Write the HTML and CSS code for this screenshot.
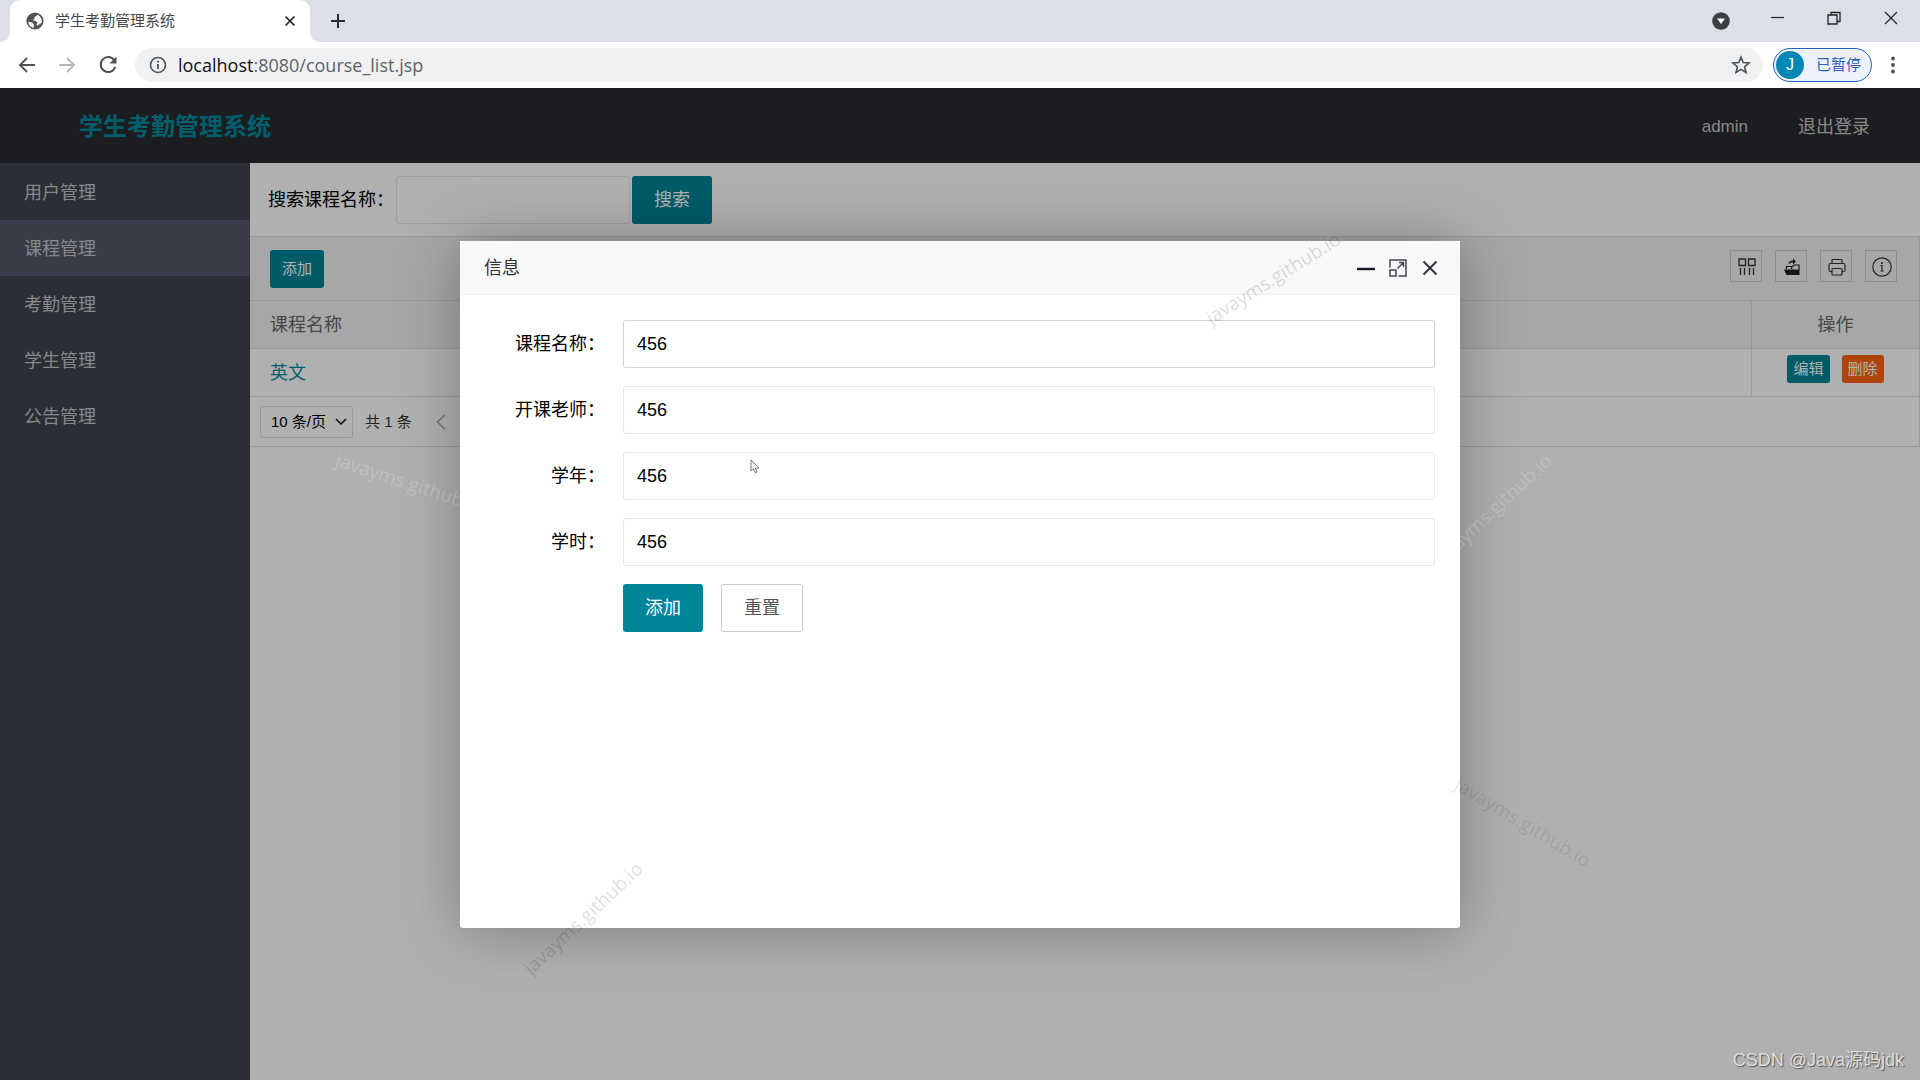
FILE: index.html
```html
<!DOCTYPE html>
<html lang="zh-CN">
<head>
<meta charset="utf-8">
<title>学生考勤管理系统</title>
<link rel="stylesheet" href="styles.css">
</head>
<body>
<header class="browser">
  <div class="tab-strip">
    <div class="tab">
      <svg class="tab-globe" viewBox="0 0 18 18" width="18" height="18"><circle cx="9" cy="9" r="8.6" fill="#505458"/><path d="M2.200 9.800 L6 10.500 L8 12.500 L7.500 16 A7 7 0 0 1 2.200 9.800 Z M11.500 2.400 L10.500 4 L8.500 5 L8.500 7 L6.500 8 L9.500 9 L11.500 10.500 L10.500 12 L11 13.800 L13.500 12.200 L15.800 10.500 C16 7 14.500 4 11.500 2.400 Z" fill="#fff"/></svg>
      <span class="tab-title">学生考勤管理系统</span>
      <button class="plain" aria-label="关闭标签页"><svg viewBox="0 0 12 12" width="12" height="12"><path d="M1.500 1.500 L10.500 10.500 M10.500 1.500 L1.500 10.500" stroke="#222" stroke-width="1.7"/></svg></button>
    </div>
    <button class="plain new-tab" aria-label="新标签页"><svg viewBox="0 0 16 16" width="16" height="16"><path d="M8 1 V15 M1 8 H15" stroke="#2a2c30" stroke-width="2"/></svg></button>
    <div class="window-tools">
      <button class="plain" aria-label="搜索标签页"><svg viewBox="0 0 18 18" width="18" height="18"><circle cx="9" cy="9" r="8.800" fill="#3c4043"/><path d="M5 6.500 H13 L9 12 Z" fill="#fff"/></svg></button>
      <button class="plain win" aria-label="最小化"><svg viewBox="0 0 14 14" width="14" height="14"><path d="M1 6.500 H14" stroke="#222" stroke-width="1.200"/></svg></button>
      <button class="plain win" aria-label="还原"><svg viewBox="0 0 14 14" width="14" height="14"><path d="M1 4 H10 V13 H1 Z M4 4 V1.500 H13 V10.500 H10" fill="none" stroke="#222" stroke-width="1.300"/></svg></button>
      <button class="plain win" aria-label="关闭"><svg viewBox="0 0 14 14" width="14" height="14"><path d="M1 1 L13 13 M13 1 L1 13" stroke="#222" stroke-width="1.200"/></svg></button>
    </div>
  </div>
  <div class="nav-bar">
    <button class="plain" aria-label="后退"><svg viewBox="0 0 18 18" width="18" height="18"><path d="M17 9 H2 M9 2 L2 9 L9 16" fill="none" stroke="#4d5156" stroke-width="1.800"/></svg></button>
    <button class="plain" aria-label="前进"><svg viewBox="0 0 18 18" width="18" height="18"><path d="M1 9 H16 M9 2 L16 9 L9 16" fill="none" stroke="#b3b5b8" stroke-width="1.800"/></svg></button>
    <button class="plain" aria-label="重新加载"><svg viewBox="0 0 20 20" width="20" height="20"><path d="M16.500 5.500 A7.500 7.500 0 1 0 17.300 12" fill="none" stroke="#4d5156" stroke-width="2"/><path d="M18.500 1.500 V8.500 H11.500 Z" fill="#4d5156"/></svg></button>
    <div class="address">
      <svg viewBox="0 0 18 18" width="18" height="18"><circle cx="9" cy="9" r="7.500" fill="none" stroke="#4d5156" stroke-width="1.600"/><path d="M9 8 V13" stroke="#4d5156" stroke-width="1.800"/><circle cx="9" cy="5.500" r="1.100" fill="#4d5156"/></svg>
      <span class="url"><span class="host">localhost</span>:8080/course_list.jsp</span>
      <button class="plain" aria-label="收藏"><svg viewBox="0 0 20 20" width="20" height="20"><path d="M10 2.200 L12.200 7.500 L18 8 L13.600 11.800 L15 17.500 L10 14.400 L5 17.500 L6.400 11.800 L2 8 L7.800 7.500 Z" fill="none" stroke="#4d5156" stroke-width="1.600"/></svg></button>
    </div>
    <button class="profile"><span class="avatar">J</span>已暂停</button>
    <button class="plain menu" aria-label="菜单"><svg viewBox="0 0 6 18" width="6" height="18"><circle cx="3" cy="2.500" r="1.900" fill="#4d5156"/><circle cx="3" cy="9" r="1.900" fill="#4d5156"/><circle cx="3" cy="15.500" r="1.900" fill="#4d5156"/></svg></button>
  </div>
</header>

<div class="app">
  <header class="app-header">
    <h1 class="logo">学生考勤管理系统</h1>
    <nav class="user-nav"><a href="#" class="user">admin</a><a href="#">退出登录</a></nav>
  </header>
  <div class="app-body">
    <nav class="sidebar">
      <a href="#">用户管理</a>
      <a href="#" class="active">课程管理</a>
      <a href="#">考勤管理</a>
      <a href="#">学生管理</a>
      <a href="#">公告管理</a>
    </nav>
    <main class="content">
      <form class="search">
        <label for="keyword">搜索课程名称：</label>
        <input id="keyword" class="field" type="text">
        <button type="button" class="btn">搜索</button>
      </form>
      <section class="grid">
        <div class="grid-tools">
          <button class="btn btn-small">添加</button>
          <div class="tool-icons">
            <button class="tool" aria-label="筛选列"><svg viewBox="0 0 18 18" width="18" height="18"><path d="M1 1 H7.500 V7.500 H1 Z M10.500 1 H17 V7.500 H10.500 Z M2.500 10 V17 M6.500 10 V17 M11.500 10 V17 M15.500 10 V17" fill="none" stroke="#333" stroke-width="1.300"/></svg></button>
            <button class="tool" aria-label="导出"><svg viewBox="0 0 18 18" width="18" height="18"><path d="M1 11.500 H16.500 V17 H3.500 Z" fill="#222"/><path d="M3.500 11 V8.500 H8.500 V11 M8.500 9.500 L11 7 H16 V12" fill="none" stroke="#222" stroke-width="1.200"/><path d="M5.500 6.500 C5.500 3.500 7.500 2.500 10 2.500 V0.500 L13 3.500 L10 6.500 V4.500 C8 4.500 6.500 5 5.500 6.500 Z" fill="#222"/></svg></button>
            <button class="tool" aria-label="打印"><svg viewBox="0 0 18 18" width="18" height="18"><path d="M4 5.500 V2.500 Q4 1.500 5 1.500 H13 Q14 1.500 14 2.500 V5.500 M4 13.500 H2.500 Q1 13.500 1 12 V7 Q1 5.500 2.500 5.500 H15.500 Q17 5.500 17 7 V12 Q17 13.500 15.500 13.500 H14 M5 10.500 H13 Q14 10.500 14 11.500 V16 Q14 17 13 17 H5 Q4 17 4 16 V11.500 Q4 10.500 5 10.500 Z" fill="none" stroke="#333" stroke-width="1.200"/></svg></button>
            <button class="tool" aria-label="提示"><svg viewBox="0 0 20 20" width="20" height="20"><circle cx="10" cy="10" r="9.200" fill="none" stroke="#333" stroke-width="1.200"/><path d="M8.500 8.500 H10 V14 M8.500 14 H11.500" fill="none" stroke="#333" stroke-width="1.200"/><circle cx="10" cy="6" r="1" fill="#333"/></svg></button>
          </div>
        </div>
        <table class="data">
          <thead><tr><th>课程名称</th><th class="ops">操作</th></tr></thead>
          <tbody><tr><td><a href="#" class="course">英文</a></td><td class="ops"><div class="op-buttons"><button class="btn btn-mini">编辑</button><button class="btn btn-mini btn-danger">删除</button></div></td></tr></tbody>
        </table>
        <div class="pager">
          <div class="page-size">
            <select aria-label="每页条数"><option>10 条/页</option></select>
            <svg viewBox="0 0 12 8" width="12" height="8"><path d="M1 1 L6 6 L11 1" fill="none" stroke="#111" stroke-width="1.500"/></svg>
          </div>
          <span>共 1 条</span>
          <button class="plain" aria-label="上一页"><svg viewBox="0 0 10 16" width="10" height="16"><path d="M9 1 L1.500 8 L9 15" fill="none" stroke="#aaa" stroke-width="1.500"/></svg></button>
        </div>
      </section>
    </main>
  </div>

  <div class="shade">
    <section class="dialog" role="dialog" aria-labelledby="dialog-title">
      <header class="dialog-head">
        <h2 id="dialog-title">信息</h2>
        <button class="plain" aria-label="最小化"><svg viewBox="0 0 18 18" width="18" height="18"><path d="M0 10 H18" stroke="#161626" stroke-width="2.400"/></svg></button>
        <button class="plain" aria-label="最大化"><svg viewBox="0 0 18 18" width="18" height="18"><path d="M1 8.500 V1 H17 V17 H9.500 M1 11 H7 V17 H1 Z M8.500 9.500 L14.500 3.500 M10 3.500 H14.500 V8" fill="none" stroke="#444752" stroke-width="1.500"/></svg></button>
        <button class="plain" aria-label="关闭"><svg viewBox="0 0 18 18" width="18" height="18"><path d="M2.500 2.500 L15.500 15.500 M15.500 2.500 L2.500 15.500" stroke="#333640" stroke-width="2"/></svg></button>
      </header>
      <form class="dialog-form">
        <label for="name">课程名称：</label><input id="name" class="field hover" type="text" value="456">
        <label for="teacher">开课老师：</label><input id="teacher" class="field" type="text" value="456">
        <label for="year">学年：</label><input id="year" class="field" type="text" value="456">
        <label for="hours">学时：</label><input id="hours" class="field" type="text" value="456">
        <div class="actions"><button type="button" class="btn">添加</button><button type="reset" class="btn btn-plain">重置</button></div>
      </form>
    </section>
  </div>
</div>

<div class="marks">
  <span class="mark mark-a">javayms.github.io</span>
  <span class="mark mark-b">javayms.github.io</span>
  <span class="mark mark-c light">javayms.github.io</span>
  <span class="mark mark-d faint">javayms.github.io</span>
  <span class="mark mark-e light">javayms.github.io</span>
  <svg class="pointer" viewBox="0 0 10 15" width="10" height="15"><path d="M1 1 V12 L3.500 9.800 L5.300 13.800 L7 13 L5.400 9.200 L9 9 Z" fill="#fff" stroke="#666" stroke-width="0.900"/></svg>
  <span class="credit">CSDN @Java源码jdk</span>
</div>
</body>
</html>
```

FILE: styles.css
```css
* { box-sizing: border-box; }

body {
  margin: 0;
  min-height: 100vh;
  display: flex;
  flex-direction: column;
  position: relative;
  overflow: hidden;
  color: #000;
  font: 18px/24px "Liberation Sans", "Noto Sans CJK SC", sans-serif;
}

h1, h2 { margin: 0; }
a { color: inherit; text-decoration: none; }
button, input, select { font: inherit; color: inherit; }
svg { display: block; flex: none; }

.plain { border: 0; padding: 0; background: none; flex: none; }

/* Browser frame */
.tab-strip {
  display: flex;
  align-items: center;
  height: 42px;
  padding-left: 10px;
  background: #dbdfe7;
}
.tab {
  display: flex;
  align-items: center;
  gap: 11px;
  align-self: stretch;
  position: relative;
  width: 300px;
  padding: 0 14px 0 16px;
  border-radius: 10px 10px 0 0;
  background: #fff;
  color: #45484c;
  font-size: 15px;
}
/* Curved feet of the active tab */
.tab::before, .tab::after {
  content: "";
  position: absolute;
  bottom: 0;
  width: 10px;
  height: 10px;
}
.tab::before { right: 100%; background: radial-gradient(circle at 0 0, transparent 10px, #fff 10px); }
.tab::after { left: 100%; background: radial-gradient(circle at 100% 0, transparent 10px, #fff 10px); }
.tab-title { flex: 1; }
.new-tab { margin-left: 20px; }
.window-tools { display: flex; align-items: center; margin-left: auto; padding-right: 22px; }
.win { margin-left: 43px; padding-bottom: 6px; }
.window-tools .win:nth-child(2) { margin-left: 40px; }

.nav-bar {
  display: flex;
  align-items: center;
  gap: 22px;
  height: 46px;
  padding: 0 24px 0 18px;
  background: #fff;
}
.address {
  flex: 1;
  display: flex;
  align-items: center;
  gap: 11px;
  height: 34px;
  margin-left: -5px;
  padding: 0 12px 0 14px;
  border-radius: 17px;
  background: #f0f1f3;
}
.url { flex: 1; color: #5f6368; font: 18px/24px "Open Sans", sans-serif; }
.host { color: #111; }
.profile {
  display: flex;
  align-items: center;
  gap: 12px;
  height: 34px;
  margin-left: -12px;
  padding: 0 10px 0 2px;
  border: 1px solid #2a62c4;
  border-radius: 17px;
  background: #edf1fc;
  color: #2c5fbe;
  font-size: 15px;
}
.avatar {
  width: 28px;
  border-radius: 50%;
  background: #0087b5;
  color: #fff;
  font-size: 16px;
  line-height: 28px;
  text-align: center;
}
.menu { margin-left: -4px; }

/* Application */
.app {
  flex: 1;
  display: flex;
  flex-direction: column;
  position: relative;
  background: #fff;
}
.app-header {
  display: flex;
  align-items: center;
  justify-content: space-between;
  height: 75px;
  padding: 2px 50px 0 79px;
  background: #292b31;
}
.logo { color: #00889b; font-size: 24px; line-height: 36px; }
.user-nav { display: flex; gap: 50px; color: #c6c6c8; }
.user { font-size: 17px; }
.app-body { flex: 1; display: flex; }
.sidebar { flex: 0 0 250px; padding-top: 1px; background: #3e434d; color: #c4c6ca; }
.sidebar a { display: block; height: 56px; padding: 1px 24px 0; line-height: 56px; }
.sidebar .active { background: #54596b; }
.content { flex: 1; min-width: 0; }

.search { display: flex; align-items: center; gap: 2px; height: 73px; padding-left: 18px; }
.search .field { width: 234px; }
.field {
  height: 48px;
  padding: 1px 13px 0;
  border: 1px solid #e6e6e6;
  border-radius: 3px;
  background: #fff;
}
.field.hover { border-color: #d2d2d2; }

.btn {
  height: 48px;
  padding: 1px 22px 0;
  border: 0;
  border-radius: 3px;
  background: #008498;
  color: #fff;
}
.btn-small { height: 38px; padding: 0 12px; font-size: 15px; }
.btn-mini { height: 28px; padding: 0 6px; font-size: 15px; }
.btn-danger { background: #ff6412; }
.btn-plain { border: 1px solid #c9c9c9; background: #fff; color: #555; }

.grid { border: solid #dedede; border-width: 1px 1px 1px 0; }
.grid-tools {
  display: flex;
  align-items: flex-start;
  justify-content: space-between;
  height: 64px;
  padding: 13px 22px 0 20px;
  border-bottom: 1px solid #dedede;
  background: #f2f2f2;
}
.tool-icons { display: flex; gap: 13px; }
.tool {
  display: flex;
  align-items: center;
  justify-content: center;
  width: 32px;
  height: 32px;
  padding: 2px 0 0 2px;
  border: 1px solid #ccc;
  background: none;
}

.data { width: 100%; border-collapse: separate; border-spacing: 0; }
.data th, .data td {
  height: 48px;
  padding: 0 20px;
  border-bottom: 1px solid #dedede;
  color: #666;
  font-weight: 400;
  text-align: left;
}
.data th { background: #f2f2f2; }
.data .ops { width: 168px; padding: 0; border-left: 1px solid #dedede; text-align: center; }
.op-buttons { display: flex; justify-content: center; gap: 12px; padding-bottom: 8px; }
.data .course { color: #00889b; }

.pager { display: flex; align-items: center; gap: 12px; height: 49px; padding-left: 10px; font-size: 15px; color: #333; }
.pager button { margin-left: 12px; }
.page-size { display: grid; align-items: center; width: 93px; height: 32px; }
.page-size select, .page-size svg { grid-area: 1 / 1; }
.page-size svg { justify-self: end; margin-right: 6px; pointer-events: none; }
.page-size select {
  width: 100%;
  height: 32px;
  padding: 0 10px;
  appearance: none;
  border: 1px solid #dedede;
  border-radius: 3px;
  background: #fff;
  color: #000;
}

/* Modal layer */
.shade {
  position: absolute;
  inset: 0;
  display: flex;
  align-items: center;
  justify-content: center;
  background: rgba(0, 0, 0, 0.31);
}
.dialog {
  width: 1000px;
  max-width: 100%;
  min-height: 687px;
  border-radius: 3px;
  background: #fff;
  box-shadow: 1px 1px 62px rgba(0, 0, 0, 0.3);
}
.dialog-head {
  display: flex;
  align-items: center;
  gap: 14px;
  height: 54px;
  padding: 2px 21px 0 24px;
  border-bottom: 1px solid #eee;
  background: #f8f8f8;
}
.dialog-head h2 { flex: 1; color: #333; font-size: 18px; font-weight: 400; line-height: 24px; }
.dialog-form {
  display: grid;
  grid-template-columns: 145px 1fr;
  align-items: center;
  gap: 18px;
  padding: 25px 25px 25px 0;
}
.dialog-form label { padding-top: 1px; text-align: right; }
.actions { grid-column: 2; display: flex; gap: 18px; }

/* Marks over the page */
.mark, .pointer, .credit { position: absolute; pointer-events: none; }
.mark {
  color: rgba(0, 0, 0, 0.15);
  font: 19px/24px "Open Sans", sans-serif;
  white-space: nowrap;
}
.mark.light { color: rgba(255, 255, 255, 0.2); }
.mark.faint { color: rgba(0, 0, 0, 0.1); }
.mark-a { left: 1273px; top: 278px; transform: translate(-50%, -50%) rotate(-32deg); }
.mark-b { left: 583px; top: 918px; transform: translate(-50%, -50%) rotate(-43deg); }
.mark-c { left: 1492px; top: 510px; transform: translate(-50%, -50%) rotate(-43deg); }
.mark-d { left: 1523px; top: 822px; transform: translate(-50%, -50%) rotate(31deg); }
.mark-e { left: 410px; top: 483px; transform: translate(-50%, -50%) rotate(18deg); }
.pointer { left: 750px; top: 459px; }
.credit {
  right: 16px;
  bottom: 8px;
  color: #dedede;
  text-shadow: 1px 1px 1px #555;
}
```
